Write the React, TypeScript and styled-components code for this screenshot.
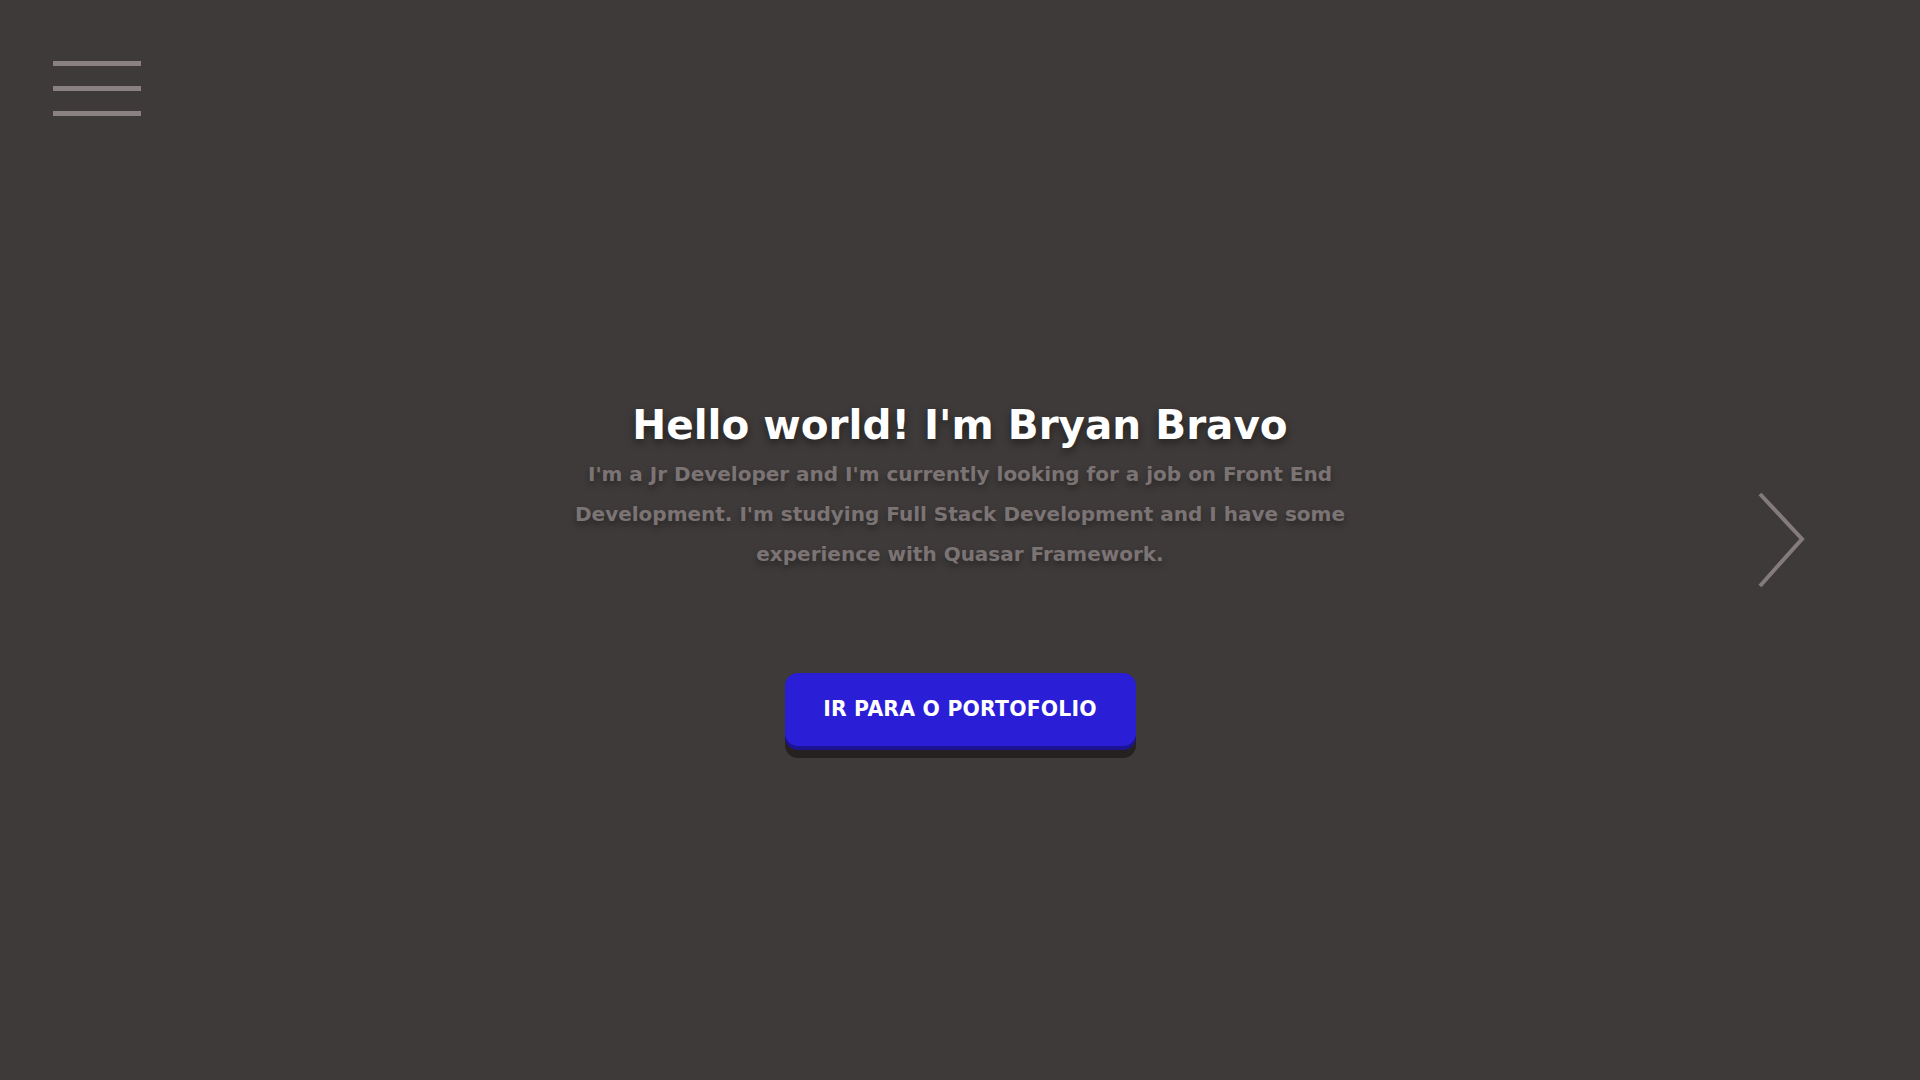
import React from "react";
import styled, { createGlobalStyle } from "styled-components";

const GlobalStyle = createGlobalStyle`
  html, body {
    margin: 0;
    padding: 0;
    background: #3e3a3a;
  }
  body {
    font-family: "DejaVu Sans", Verdana, sans-serif;
  }
  * { box-sizing: border-box; }
`;

const Page = styled.div`
  position: relative;
  min-height: 100vh;
  background: #3e3a3a;
  display: flex;
  flex-direction: column;
`;

const TopBar = styled.header`
  padding: 61px 0 0 53px;
  display: flex;
`;

const MenuButton = styled.button`
  display: flex;
  flex-direction: column;
  gap: 20px;
  padding: 0;
  margin: 0;
  border: none;
  background: transparent;
  cursor: pointer;
`;

const Bar = styled.span`
  display: block;
  width: 88px;
  height: 5px;
  background: #8a8282;
`;

const Hero = styled.main`
  display: flex;
  flex-direction: column;
  align-items: center;
  padding-top: 286px;
  text-align: center;
`;

const Title = styled.h1`
  margin: 0;
  font-size: 40.5px;
  font-weight: 700;
  line-height: 47px;
  color: #ffffff;
  text-shadow: 0 4px 8px rgba(0, 0, 0, 0.45);
`;

const Intro = styled.p`
  margin: 5px 0 0;
  max-width: 800px;
  font-size: 20px;
  font-weight: 700;
  line-height: 40px;
  color: #7c7474;
  text-shadow: 0 4px 6px rgba(0, 0, 0, 0.35);
`;

const CtaButton = styled.button`
  margin-top: 99px;
  width: 351px;
  height: 73px;
  border: none;
  border-radius: 13px;
  background: #2a1ed6;
  color: #ffffff;
  font-family: "DejaVu Sans", Verdana, sans-serif;
  font-size: 20.4px;
  font-weight: 700;
  letter-spacing: 0.2px;
  padding-bottom: 2px;
  cursor: pointer;
  box-shadow: 0 4px 0 #1c1492, 0 12px 0 #252121;
`;

const NextArrow = styled.button`
  position: absolute;
  top: 490px;
  right: 112px;
  width: 52px;
  height: 100px;
  padding: 0;
  border: none;
  background: transparent;
  cursor: pointer;
  display: flex;
  align-items: center;
  justify-content: center;
`;

export default function App() {
  return (
    <>
      <GlobalStyle />
      <Page>
        <TopBar>
          <MenuButton aria-label="menu">
            <Bar />
            <Bar />
            <Bar />
          </MenuButton>
        </TopBar>
        <Hero>
          <Title>Hello world! I'm Bryan Bravo</Title>
          <Intro>
            I'm a Jr Developer and I'm currently looking for a job on Front End
            Development. I'm studying Full Stack Development and I have some
            experience with Quasar Framework.
          </Intro>
          <CtaButton>IR PARA O PORTOFOLIO</CtaButton>
        </Hero>
        <NextArrow aria-label="next">
          <svg width="52" height="100" viewBox="0 0 52 100">
            <polyline
              points="4,4 46,49 4,96"
              fill="none"
              stroke="#847c7c"
              strokeWidth="4"
            />
          </svg>
        </NextArrow>
      </Page>
    </>
  );
}
